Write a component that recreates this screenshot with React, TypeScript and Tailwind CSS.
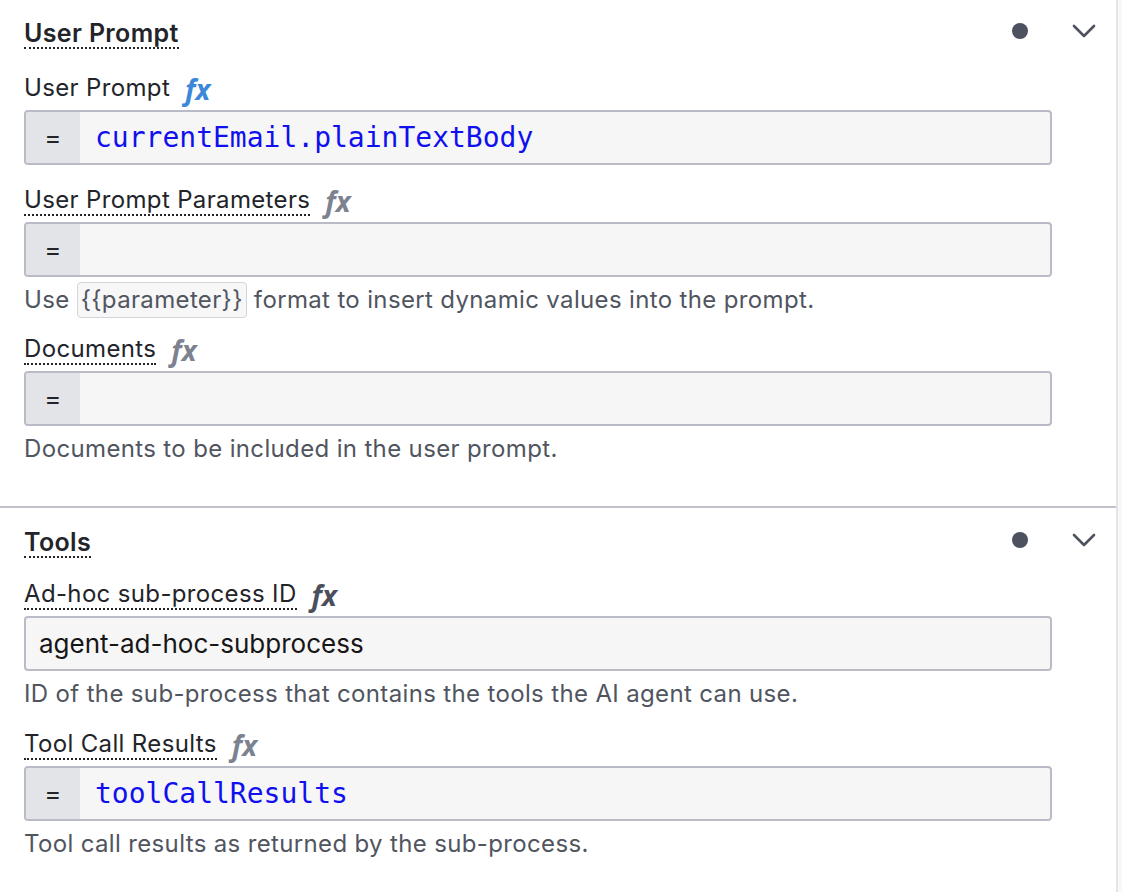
type FxTone = "blue" | "gray" | "dark";

const fxColor: Record<FxTone, string> = {
  blue: "text-[#3b87d9]",
  gray: "text-[#7d8290]",
  dark: "text-[#4b4f5b]",
};

function Fx({ tone }: { tone: FxTone }) {
  return (
    <span
      className={`ml-[15px] font-['Open_Sans',sans-serif] text-[28px] font-bold italic leading-[28px] tracking-normal ${fxColor[tone]}`}
    >
      fx
    </span>
  );
}

function Chevron() {
  return (
    <svg width="24" height="14" viewBox="0 0 24 14" fill="none">
      <path
        d="M2 2 L12 12 L22 2"
        stroke="#4d5160"
        strokeWidth="2.6"
        strokeLinecap="round"
        strokeLinejoin="round"
      />
    </svg>
  );
}

function GroupHeader({ title }: { title: string }) {
  return (
    <div className="flex items-start justify-between pr-[20px]">
      <span className="border-b-2 border-dotted border-[#22242a] text-[25px] font-semibold leading-[28px] text-[#22242a]">
        {title}
      </span>
      <div className="flex h-[24px] items-center gap-[44px]">
        <span className="h-[16px] w-[16px] rounded-full bg-[#4d5160]"></span>
        <Chevron />
      </div>
    </div>
  );
}

type FieldProps = {
  label: string;
  fx: FxTone;
  underline?: boolean;
  feel?: boolean;
  value?: string;
  mono?: boolean;
  help?: React.ReactNode;
  top: string;
};

function Field({ label, fx, underline = true, feel = true, value, mono, help, top }: FieldProps) {
  return (
    <div className={top}>
      <div className="flex items-center">
        <span
          className={`border-b-2 border-dotted text-[24px] leading-[28px] text-[#22242a] ${
            underline ? "border-[#22242a]" : "border-transparent"
          }`}
        >
          {label}
        </span>
        <Fx tone={fx} />
      </div>
      <div className="mt-[6px] mr-[64px] flex h-[55px] overflow-hidden rounded-[4px] border-2 border-[#b9bcc6] bg-[#f6f6f6]">
        {feel && (
          <div className="flex w-[54px] shrink-0 items-center justify-center bg-[#e3e4e8] text-[26px] text-[#22242a]">
            =
          </div>
        )}
        {value && (
          <div
            className={
              mono
                ? "flex items-center pl-[15px] font-['DejaVu_Sans_Mono',monospace] text-[28px] tracking-normal text-[#1010ee]"
                : "flex items-center pl-[13px] text-[26px] tracking-normal text-[#161616]"
            }
          >
            {value}
          </div>
        )}
      </div>
      {help && (
        <div className="mt-[5px] text-[24px] leading-[36px] text-[#50555f]">{help}</div>
      )}
    </div>
  );
}

export default function App() {
  return (
    <div className="flex h-[892px] w-[1122px] bg-white font-['Inter',sans-serif] tracking-[0.35px]">
      <div className="w-[1118px] border-r-2 border-[#e5e5e7]">
        <section className="border-b-2 border-[#c0c3cc] pb-[39px] pl-[24px] pt-[19px]">
          <GroupHeader title="User Prompt" />
          <Field
            top="mt-[25px]"
            label="User Prompt"
            fx="blue"
            underline={false}
            value="currentEmail.plainTextBody"
            mono
          />
          <Field
            top="mt-[21px]"
            label="User Prompt Parameters"
            fx="gray"
            help={
              <>
                Use{" "}
                <span className="inline-block rounded-[4px] border border-[#d3d5dc] bg-[#f7f7f8] px-[3px] leading-[34px]">
                  {"{{parameter}}"}
                </span>{" "}
                format to insert dynamic values into the prompt.
              </>
            }
          />
          <Field
            top="mt-[17px]"
            label="Documents"
            fx="gray"
            help="Documents to be included in the user prompt."
          />
        </section>
        <section className="pl-[24px] pt-[20px]">
          <GroupHeader title="Tools" />
          <Field
            top="mt-[22px]"
            label="Ad-hoc sub-process ID"
            fx="dark"
            feel={false}
            value="agent-ad-hoc-subprocess"
            help="ID of the sub-process that contains the tools the AI agent can use."
          />
          <Field
            top="mt-[18px]"
            label="Tool Call Results"
            fx="gray"
            value="toolCallResults"
            mono
            help="Tool call results as returned by the sub-process."
          />
        </section>
      </div>
      <div className="flex-1 bg-[#f8f8f9]"></div>
    </div>
  );
}
